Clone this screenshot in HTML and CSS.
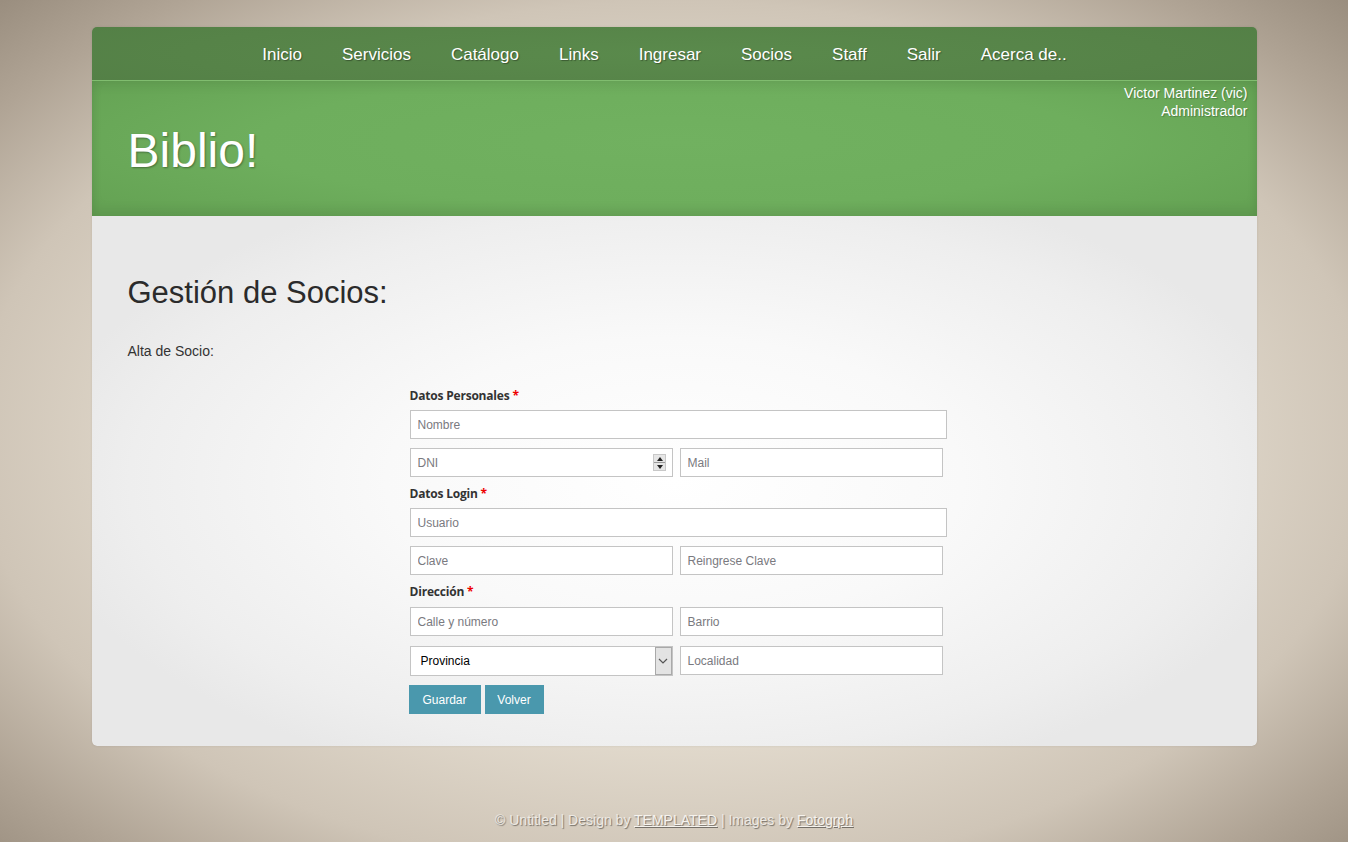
FILE: index.html
```html
<!DOCTYPE html>
<html lang="es">
<head>
<meta charset="utf-8">
<title>Biblio!</title>
<link rel="stylesheet" href="styles.css">
</head>
<body>
<div class="wrapper">
  <nav class="nav">
    <a href="#">Inicio</a>
    <a href="#">Servicios</a>
    <a href="#">Catálogo</a>
    <a href="#">Links</a>
    <a href="#">Ingresar</a>
    <a href="#">Socios</a>
    <a href="#">Staff</a>
    <a href="#">Salir</a>
    <a href="#">Acerca de..</a>
  </nav>
  <header class="header">
    <div class="user">Victor Martinez (vic)<br>Administrador</div>
    <h1 class="logo">Biblio!</h1>
  </header>
  <main class="content">
    <h2 class="title">Gestión de Socios:</h2>
    <p class="subtitle">Alta de Socio:</p>
    <form class="form">
      <div class="label">Datos Personales <span class="req">*</span></div>
      <input class="field full" type="text" placeholder="Nombre">
      <div class="row first">
        <div class="spin-wrap">
          <input class="field" type="text" placeholder="DNI">
          <span class="spinner"><span class="up"></span><span class="down"></span></span>
        </div>
        <input class="field" type="text" placeholder="Mail">
      </div>
      <div class="label">Datos Login <span class="req">*</span></div>
      <input class="field full" type="text" placeholder="Usuario">
      <div class="row">
        <input class="field" type="password" placeholder="Clave">
        <input class="field" type="password" placeholder="Reingrese Clave">
      </div>
      <div class="label">Dirección <span class="req">*</span></div>
      <div class="row first">
        <input class="field" type="text" placeholder="Calle y número">
        <input class="field" type="text" placeholder="Barrio">
      </div>
      <div class="row">
        <div class="select-wrap">
          <select class="select"><option>Provincia</option></select>
          <span class="arrow"><svg width="10" height="6" viewBox="0 0 10 6"><path d="M1 1 L5 5 L9 1" fill="none" stroke="#555" stroke-width="1.2"/></svg></span>
        </div>
        <input class="field" type="text" placeholder="Localidad">
      </div>
      <div class="buttons">
        <button type="button" class="btn">Guardar</button>
        <button type="button" class="btn btn-volver">Volver</button>
      </div>
    </form>
  </main>
</div>
<footer class="footer">© Untitled | Design by <a href="#">TEMPLATED</a> | Images by <a href="#">Fotogrph</a></footer>
</body>
</html>
```

FILE: styles.css
```css
html, body {
  margin: 0;
  padding: 0;
}
body {
  min-height: 842px;
  font-family: "Liberation Sans", Arial, sans-serif;
  background: radial-gradient(ellipse 72% 72% at 50% 52%, #e6e0d4 0%, #e1d9cc 50%, #cfc5b7 72%, #b0a495 88%, #9a8e7f 100%);
  padding-top: 27px;
  box-sizing: border-box;
}
.wrapper {
  width: 1165px;
  margin: 0 auto;
  border-radius: 5px;
  overflow: hidden;
  box-shadow: 0 0 3px rgba(0,0,0,0.08);
}
.nav {
  height: 53px;
  background: #578449;
  background: radial-gradient(ellipse 70% 120% at 50% 50%, #5a8a4c 0%, #568348 60%, #527e45 100%);
  border-bottom: 1px solid #80bd6f;
  display: flex;
  justify-content: center;
  padding-right: 19px;
}
.nav a {
  color: #fff;
  text-decoration: none;
  font-size: 17px;
  line-height: 55px;
  padding: 0 20px;
  text-shadow: 1px 1px 1px rgba(0,0,0,0.35);
}
.header {
  height: 135px;
  box-sizing: border-box;
  padding-top: 3px;
  background: radial-gradient(ellipse 60% 80% at 50% 45%, #71b160 0%, #6eae5d 60%, #65a354 100%);
  box-shadow: inset 0 -6px 12px rgba(0,0,0,0.08), inset 0 6px 10px rgba(0,0,0,0.06);
}
.user {
  text-align: right;
  color: #fff;
  font-size: 14px;
  line-height: 18px;
  padding-right: 9px;
  text-shadow: 1px 1px 1px rgba(0,0,0,0.25);
}
.logo {
  margin: 0;
  padding-left: 36px;
  padding-top: 1px;
  font-weight: normal;
  font-size: 48px;
  line-height: 60px;
  color: #fff;
  text-shadow: 1px 1px 2px rgba(0,0,0,0.35);
}
.content {
  display: block;
  padding: 58px 36px 32px;
  background: radial-gradient(ellipse 55% 60% at 50% 50%, #ffffff 0%, #f9f9f9 45%, #eeeeee 85%, #e8e8e8 100%);
  border-bottom-left-radius: 5px;
  border-bottom-right-radius: 5px;
}
.title {
  margin: 0;
  font-weight: normal;
  font-size: 31px;
  line-height: 37px;
  color: #2b2b2b;
}
.subtitle {
  margin: 32px 0 0;
  font-size: 14px;
  line-height: 16px;
  color: #333;
}
.form {
  width: 537px;
  margin: 29px 0 0 282px;
  display: flex;
  flex-direction: column;
}
.label {
  font-family: "Open Sans", "Noto Sans", sans-serif;
  font-weight: bold;
  font-size: 12px;
  line-height: 16px;
  color: #333;
  margin-top: 9px;
  margin-bottom: 6px;
  letter-spacing: -0.2px;
}
.label:first-child {
  margin-top: 0;
}
.req {
  color: #e00;
}
.field {
  box-sizing: border-box;
  height: 29px;
  border: 1px solid #c4c4c4;
  background: #fff;
  padding: 0 7px;
  font-family: "Liberation Sans", Arial, sans-serif;
  font-size: 12px;
  color: #333;
  outline: none;
  width: 263px;
  margin: 0;
}
.field::placeholder {
  color: #7a7a80;
}
.field.full {
  width: 537px;
}
.row {
  display: flex;
  gap: 7px;
  margin-top: 10px;
}
.field.full + .row {
  margin-top: 9px;
}
.label + .row {
  margin-top: 1px;
}
.spin-wrap, .select-wrap {
  position: relative;
  width: 263px;
  height: 29px;
}
.select-wrap {
  height: 30px;
}
.spinner {
  position: absolute;
  right: 7px;
  top: 6px;
  width: 13px;
  height: 17px;
  background: #e6e6e6;
  border: 1px solid #c8c8c8;
  box-sizing: border-box;
  display: flex;
  flex-direction: column;
}
.spinner .up, .spinner .down {
  flex: 1;
  position: relative;
}
.spinner .up {
  border-bottom: 1px solid #999;
}
.spinner .up::after, .spinner .down::after {
  content: "";
  position: absolute;
  left: 3px;
  width: 0;
  height: 0;
  border-left: 3px solid transparent;
  border-right: 3px solid transparent;
}
.spinner .up::after {
  top: 2px;
  border-bottom: 4px solid #222;
}
.spinner .down::after {
  top: 2px;
  border-top: 4px solid #222;
}
.select {
  -webkit-appearance: none;
  appearance: none;
  box-sizing: border-box;
  width: 263px;
  height: 30px;
  border: 1px solid #c4c4c4;
  background: #fff;
  padding: 0 10px;
  font-family: "Liberation Sans", Arial, sans-serif;
  font-size: 12px;
  color: #000;
  border-radius: 0;
  outline: none;
}
.arrow {
  position: absolute;
  right: 1px;
  top: 1px;
  width: 17px;
  height: 28px;
  box-sizing: border-box;
  background: #e3e3e3;
  border: 1px solid #a9a9a9;
  display: flex;
  align-items: center;
  justify-content: center;
}
.buttons {
  display: flex;
  gap: 4px;
  margin-top: 9px;
  margin-left: -1px;
}
.btn {
  height: 29px;
  border: none;
  background: #4a98ad;
  color: #fff;
  font-family: "Liberation Sans", Arial, sans-serif;
  font-size: 12px;
  padding: 0;
  width: 72px;
  cursor: pointer;
}
.btn-volver {
  width: 59px;
}
.footer {
  text-align: center;
  margin-top: 66px;
  font-size: 14px;
  line-height: 16px;
  color: #eeeae4;
  text-shadow: 1px 1px 1px rgba(0,0,0,0.45);
  padding-bottom: 14px;
}
.footer a {
  color: #f6f3ee;
  text-decoration: underline;
}
```
